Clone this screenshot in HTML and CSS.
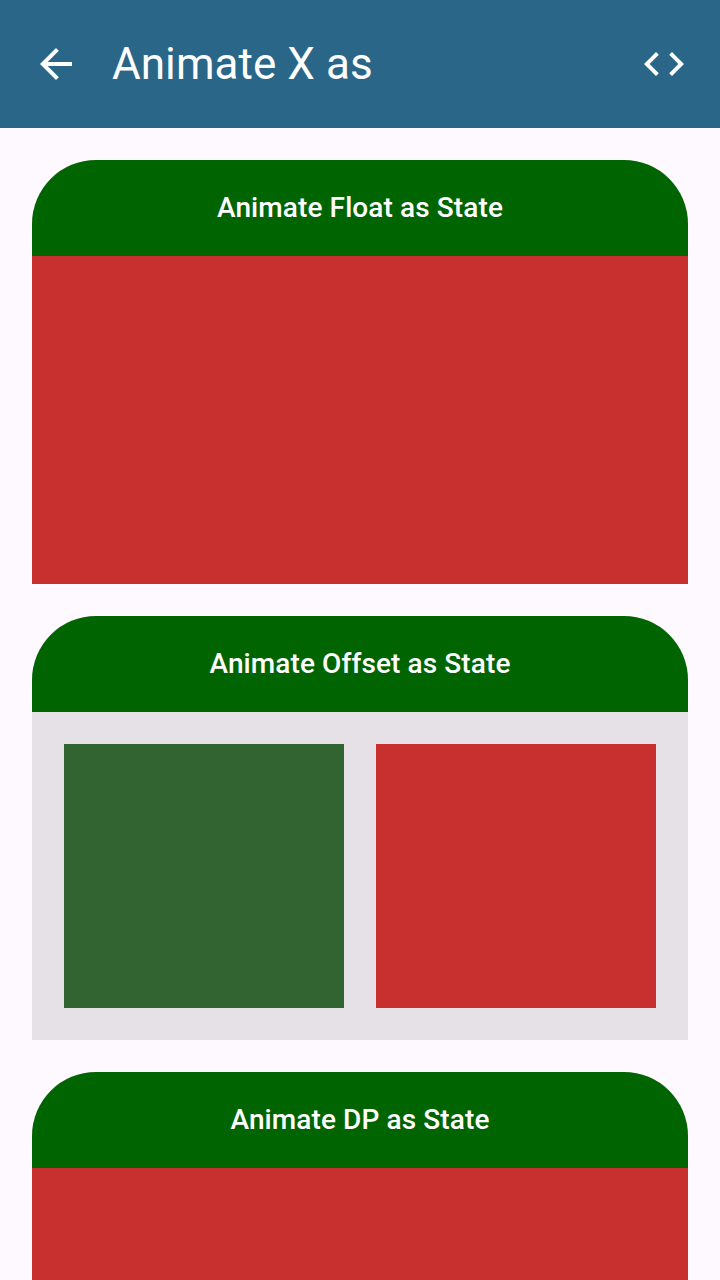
FILE: index.html
```html
<!DOCTYPE html>
<html lang="en">
<head>
<meta charset="utf-8">
<title>Animate X as</title>
<link rel="stylesheet" href="styles.css">
</head>
<body>
<header class="app-bar">
  <svg class="icon" viewBox="0 0 24 24"><path d="M20 11H7.83l5.59-5.59L12 4l-8 8 8 8 1.41-1.41L7.83 13H20v-2z"/></svg>
  <h1 class="title">Animate X as</h1>
  <svg class="icon" viewBox="0 0 24 24"><path d="M9.4 16.6 4.8 12l4.6-4.6L8 6l-6 6 6 6 1.4-1.4zm5.2 0 4.6-4.6-4.6-4.6L16 6l6 6-6 6-1.4-1.4z"/></svg>
</header>
<main class="list">
  <section class="card">
    <h2 class="card-title">Animate Float as State</h2>
    <div class="panel red"></div>
  </section>
  <section class="card">
    <h2 class="card-title">Animate Offset as State</h2>
    <div class="panel boxes">
      <div class="box green"></div>
      <div class="box red"></div>
    </div>
  </section>
  <section class="card card-last">
    <h2 class="card-title">Animate DP as State</h2>
    <div class="panel red"></div>
  </section>
</main>
</body>
</html>
```
FILE: styles.css
```css
* { box-sizing: border-box; }
body {
  margin: 0;
  height: 1280px;
  overflow: hidden;
  display: flex;
  flex-direction: column;
  background: #fef8ff;
  font-family: Roboto, sans-serif;
}
.app-bar {
  flex: none;
  height: 128px;
  padding: 0 32px;
  display: flex;
  align-items: center;
  gap: 32px;
  background: #2a6688;
  color: #fff;
}
.icon { flex: none; width: 48px; height: 48px; fill: #fff; }
.title {
  flex: 1;
  margin: 0;
  font-size: 44px;
  font-weight: 400;
  line-height: 56px;
  letter-spacing: 0.06px;
}
.list {
  flex: 1;
  min-height: 0;
  padding: 32px 32px 0;
  display: flex;
  flex-direction: column;
  gap: 32px;
}
.card {
  flex: none;
  display: flex;
  flex-direction: column;
  border-radius: 64px 64px 0 0;
  overflow: hidden;
}
.card-last { flex: 1; min-height: 0; }
.card-title {
  flex: none;
  margin: 0;
  height: 96px;
  background: #006400;
  color: #fff;
  font-size: 28px;
  font-weight: 500;
  line-height: 96px;
  letter-spacing: 0.1px;
  text-align: center;
}
.panel { height: 328px; }
.card-last .panel { flex: 1; height: auto; }
.red { background: #c82f2f; }
.green { background: #316430; }
.boxes {
  display: flex;
  gap: 32px;
  padding: 32px;
  background: #e5e1e7;
}
.box { flex: 1; }
```
